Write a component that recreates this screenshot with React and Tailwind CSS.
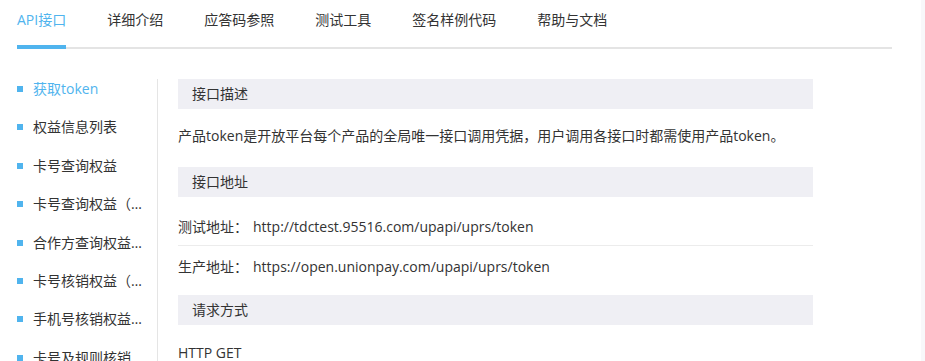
import React from 'react';

const tabs = ['API接口', '详细介绍', '应答码参照', '测试工具', '签名样例代码', '帮助与文档'];

const menu = [
    '获取token',
    '权益信息列表',
    '卡号查询权益',
    '卡号查询权益（批量）',
    '合作方查询权益信息',
    '卡号核销权益（批量）',
    '手机号核销权益信息',
    '卡号及规则核销权益',
];

const SectionTitle = ({ children }) => (
    <div className="h-[30px] bg-[#efeff4] pl-[14px] leading-[30px] text-[#333]">{children}</div>
);

const App = () => {
    return (
        <div
            className="flex h-[361px] w-[925px] overflow-hidden bg-white text-[14px] text-[#333]"
            style={{ fontFamily: '"Open Sans", "Noto Sans CJK SC", sans-serif' }}
        >
            <div className="flex-1">
                {/* Tabs */}
                <div className="ml-[17px] flex w-[875px] border-b-2 border-[#e4e4e4]">
                    {tabs.map((t, i) => (
                        <div
                            key={t}
                            className={`-mb-[2px] mr-[41px] border-b-4 pb-[15px] pt-[10px] leading-[20px] ${i === 0 ? 'border-[#50b4ee] text-[#50b4ee]' : 'border-transparent text-[#333]'}`}
                        >
                            {t}
                        </div>
                    ))}
                </div>

                <div className="mt-[30px] flex">
                    {/* Sidebar */}
                    <div className="h-[400px] w-[158px] shrink-0 border-r border-[#e5e5e5]">
                        {menu.map((m, i) => (
                            <div key={m} className="mb-[18.4px] flex items-center pl-[17px] leading-[20px]">
                                <span className="h-[6px] w-[6px] shrink-0 bg-[#50b4ee]"></span>
                                <span
                                    className={`ml-[10px] w-[113px] overflow-hidden text-ellipsis whitespace-nowrap ${i === 0 ? 'text-[#50b4ee]' : 'text-[#333]'}`}
                                >
                                    {m}
                                </span>
                            </div>
                        ))}
                    </div>

                    {/* Content */}
                    <div className="w-[655px] pl-[20px]">
                        <SectionTitle>接口描述</SectionTitle>
                        <p className="pb-[21px] pt-[17px] leading-[20px]">
                            产品token是开放平台每个产品的全局唯一接口调用凭据，用户调用各接口时都需使用产品token。
                        </p>

                        <SectionTitle>接口地址</SectionTitle>
                        <div className="mb-[9px] mt-[10px]">
                            <div className="flex h-[39px] items-center border-b border-[#ececec]">
                                <span>测试地址：</span>
                                <span className="ml-[5px]">http://tdctest.95516.com/upapi/uprs/token</span>
                            </div>
                            <div className="flex h-[40px] items-center">
                                <span>生产地址：</span>
                                <span className="ml-[5px]">https://open.unionpay.com/upapi/uprs/token</span>
                            </div>
                        </div>

                        <SectionTitle>请求方式</SectionTitle>
                        <p className="pt-[18px] leading-[20px]">HTTP GET</p>
                    </div>
                </div>
            </div>
            <div className="h-full w-[4px] bg-[#f8f8fa]"></div>
        </div>
    );
};

export default App;
